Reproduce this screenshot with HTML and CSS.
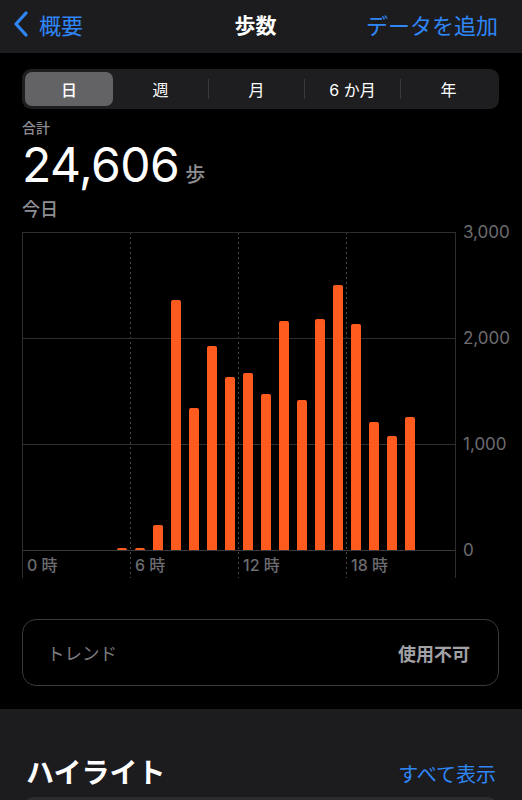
FILE: index.html
```html
<!DOCTYPE html>
<html lang="ja">
<head>
<meta charset="utf-8">
<link rel="stylesheet" href="styles.css">
</head>
<body>
<div class="screen">
  <header class="nav">
    <div class="nav-back">
      <svg class="chev" width="16" height="26" viewBox="0 0 16 26"><path d="M13 2 L3 13 L13 24" fill="none" stroke="currentColor" stroke-width="3.2" stroke-linecap="round" stroke-linejoin="round"/></svg>
      <span>概要</span>
    </div>
    <div class="nav-title">歩数</div>
    <div class="nav-action">データを追加</div>
  </header>

  <main class="content">
    <div class="seg">
      <div class="seg-item active">日</div>
      <div class="seg-item">週</div>
      <div class="seg-sep"></div>
      <div class="seg-item">月</div>
      <div class="seg-sep"></div>
      <div class="seg-item">6 か月</div>
      <div class="seg-sep"></div>
      <div class="seg-item">年</div>
    </div>

    <div class="summary">
      <div class="sum-label">合計</div>
      <div class="sum-value"><span class="num">24,606</span><span class="unit">歩</span></div>
      <div class="sum-date">今日</div>
    </div>

    <div class="chart-row">
      <div class="chart">
        <div class="bars">
          <div class="slot"></div><div class="slot"></div><div class="slot"></div><div class="slot"></div><div class="slot"></div>
          <div class="slot"><div class="bar" style="height:2px"></div></div>
          <div class="slot"><div class="bar" style="height:2px"></div></div>
          <div class="slot"><div class="bar" style="height:25px"></div></div>
          <div class="slot"><div class="bar" style="height:250px"></div></div>
          <div class="slot"><div class="bar" style="height:142px"></div></div>
          <div class="slot"><div class="bar" style="height:204px"></div></div>
          <div class="slot"><div class="bar" style="height:173px"></div></div>
          <div class="slot"><div class="bar" style="height:177px"></div></div>
          <div class="slot"><div class="bar" style="height:156px"></div></div>
          <div class="slot"><div class="bar" style="height:229px"></div></div>
          <div class="slot"><div class="bar" style="height:150px"></div></div>
          <div class="slot"><div class="bar" style="height:231px"></div></div>
          <div class="slot"><div class="bar" style="height:265px"></div></div>
          <div class="slot"><div class="bar" style="height:226px"></div></div>
          <div class="slot"><div class="bar" style="height:128px"></div></div>
          <div class="slot"><div class="bar" style="height:114px"></div></div>
          <div class="slot"><div class="bar" style="height:133px"></div></div>
          <div class="slot"></div><div class="slot"></div>
        </div>
        <div class="xlabels">
          <span>0 時</span><span>6 時</span><span>12 時</span><span>18 時</span>
        </div>
      </div>
      <div class="yaxis">
        <span>3,000</span><span>2,000</span><span>1,000</span><span>0</span>
      </div>
    </div>

    <div class="trend">
      <span class="trend-label">トレンド</span>
      <span class="trend-value">使用不可</span>
    </div>
  </main>

  <section class="highlights">
    <div class="hl-head">
      <h2>ハイライト</h2>
      <span class="hl-link">すべて表示</span>
    </div>
    <div class="hl-card"></div>
  </section>
</div>
</body>
</html>
```

FILE: styles.css
```css
* { box-sizing: border-box; }
html, body { margin: 0; padding: 0; background: #000; }
body {
  font-family: "Inter", "Noto Sans CJK JP", "Noto Sans", sans-serif;
  color: #fff;
}
.screen { width: 522px; height: 800px; overflow: hidden; background: #000; }

.nav {
  height: 53px;
  background: #1c1c1e;
  display: grid;
  grid-template-columns: 1fr auto 1fr;
  align-items: center;
  padding: 0 24px 5px 13px;
}
.nav-back {
  display: flex;
  align-items: center;
  gap: 10px;
  color: #2f86f6;
  font-size: 22px;
}
.chev { color: #2f86f6; display: block; }
.nav-title { font-size: 21px; font-weight: 700; }
.nav-action { justify-self: end; color: #2f86f6; font-size: 22px; }

.content { padding: 16px 23px 0 22px; }

.seg {
  height: 40px;
  background: #1e1e20;
  border-radius: 9px;
  padding: 3px;
  display: flex;
  align-items: center;
}
.seg-item {
  flex: 1;
  height: 34px;
  display: flex;
  align-items: center;
  justify-content: center;
  font-size: 16px;
  border-radius: 7px;
}
.seg-item.active { background: #636366; flex: 0 0 88px; font-weight: 500; }
.seg-sep { width: 1px; height: 20px; background: #3a3a3c; }

.summary { padding-top: 9px; }
.sum-label { font-size: 14px; line-height: 20px; color: #8e8e93; font-weight: 500; }
.sum-value { display: flex; align-items: baseline; gap: 6px; line-height: 50px; margin-top: 2px; }
.num { font-size: 48px; font-weight: 400; letter-spacing: -0.5px; }
.unit { font-size: 20px; color: #8e8e93; font-weight: 500; }
.sum-date { font-size: 18px; line-height: 24px; color: #8e8e93; font-weight: 500; margin-top: -2px; }

.chart-row { display: flex; margin-top: 10px; }
.chart {
  width: 434px;
  height: 346px;
  border-left: 1px solid #2e2e30;
  border-right: 1px solid #2e2e30;
  background:
    linear-gradient(#2e2e30, #2e2e30) 0 0 / 100% 1px no-repeat,
    linear-gradient(#2e2e30, #2e2e30) 0 106px / 100% 1px no-repeat,
    linear-gradient(#2e2e30, #2e2e30) 0 212px / 100% 1px no-repeat,
    linear-gradient(#3a3a3c, #3a3a3c) 0 318px / 100% 1px no-repeat,
    repeating-linear-gradient(to bottom, #4a4a4c 0 2px, transparent 2px 5px) 107px 0 / 1px 100% no-repeat,
    repeating-linear-gradient(to bottom, #4a4a4c 0 2px, transparent 2px 5px) 215px 0 / 1px 100% no-repeat,
    repeating-linear-gradient(to bottom, #4a4a4c 0 2px, transparent 2px 5px) 323px 0 / 1px 100% no-repeat;
}
.bars { height: 318px; display: flex; align-items: flex-end; }
.slot { width: 18px; height: 100%; display: flex; align-items: flex-end; justify-content: center; }
.bar { width: 10px; background: #ff5b1f; border-radius: 2px 2px 0 0; }
.xlabels { display: flex; height: 28px; align-items: center; }
.xlabels span {
  width: 108px;
  padding-left: 4px;
  font-size: 16px;
  color: #6c6c70;
  font-weight: 500;
}
.yaxis {
  display: grid;
  grid-template-rows: 106px 106px 106px 18px;
  padding-left: 7px;
}
.yaxis span {
  font-size: 17px;
  line-height: 18px;
  margin-top: -9px;
  color: #6c6c70;
}

.trend {
  margin-top: 41px;
  height: 67px;
  border: 1px solid #3a3a3c;
  border-radius: 14px;
  display: flex;
  align-items: center;
  justify-content: space-between;
  padding: 0 28px 0 24px;
  font-size: 17.5px;
}
.trend-label { color: #7c7c80; }
.trend-value { color: #a1a1a6; font-weight: 700; font-size: 18px; }

.highlights {
  margin-top: 23px;
  background: #1c1c1e;
  height: 200px;
  padding: 44px 26px 0 26px;
}
.hl-head { display: flex; align-items: center; justify-content: space-between; height: 36px; }
.hl-head h2 { margin: 0; font-size: 28px; font-weight: 700; }
.hl-link { color: #2f86f6; font-size: 20px; margin-top: 4px; }
.hl-card { margin: 8px -3px 0 -4px; height: 80px; background: #2c2c2e; border-radius: 12px; }
```
